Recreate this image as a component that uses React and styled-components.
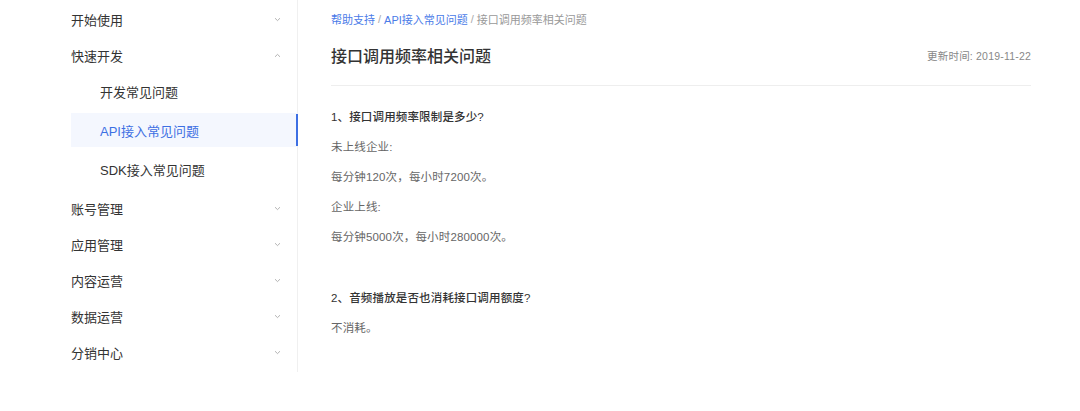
import React from "react";
import styled, { createGlobalStyle } from "styled-components";

const Global = createGlobalStyle`
  html, body { margin: 0; padding: 0; background: #fff; }
  body {
    font-family: "Liberation Sans", "Noto Sans CJK SC", sans-serif;
    color: #333;
    -webkit-font-smoothing: antialiased;
  }
`;

const Page = styled.div`
  display: flex;
  align-items: flex-start;
  padding-left: 71px;
  width: 1080px;
  box-sizing: border-box;
`;

const Sidebar = styled.nav`
  width: 227px;
  flex-shrink: 0;
  padding-top: 1px;
  box-sizing: border-box;
  border-right: 1px solid #f0f0f0;
  height: 372px;
`;

const MenuItem = styled.div`
  display: flex;
  align-items: center;
  justify-content: space-between;
  height: 36px;
  padding-right: 16px;
  font-size: 13px;
  color: #333;
`;

const SubList = styled.div`
  display: flex;
  flex-direction: column;
  gap: 5px;
  padding: 1px 0 4px;
`;

const SubItem = styled.div`
  position: relative;
  display: flex;
  align-items: center;
  height: 34px;
  padding-left: 29px;
  font-size: 13px;
  color: ${(p) => (p.$active ? "#3d6fe3" : "#333")};
  background: ${(p) => (p.$active ? "#f4f7fe" : "transparent")};
  &::after {
    content: "";
    display: ${(p) => (p.$active ? "block" : "none")};
    position: absolute;
    right: -1px;
    top: 1px;
    bottom: 1px;
    width: 2px;
    background: #3d6fe3;
  }
`;

const Chevron = ({ up }) => (
  <svg width="7" height="5" viewBox="0 0 7 5" style={{ transform: up ? "rotate(180deg)" : "none" }}>
    <path d="M1 1.2 L3.5 3.6 L6 1.2" fill="none" stroke="#a5a5a5" strokeWidth="0.85" />
  </svg>
);

const Main = styled.main`
  width: 700px;
  margin-left: 33px;
`;

const Breadcrumb = styled.div`
  height: 37px;
  display: flex;
  align-items: center;
  font-size: 11px;
  color: #999;
`;

const Crumb = styled.span`
  color: ${(p) => (p.$link ? "#4a7be8" : "#999")};
`;

const Sep = styled.span`
  margin: 0 3px;
  color: #aaa;
`;

const TitleRow = styled.div`
  display: flex;
  align-items: center;
  justify-content: space-between;
  height: 36px;
  padding-bottom: 12px;
  border-bottom: 1px solid #eeeeee;
`;

const Title = styled.h1`
  margin: 0;
  font-size: 16px;
  font-weight: 500;
  color: #333;
`;

const Updated = styled.span`
  font-size: 10.5px;
  color: #888;
  letter-spacing: 0.2px;
`;

const Body = styled.div`
  padding-top: 16px;
`;

const Section = styled.section`
  & + & { margin-top: 31px; }
`;

const Line = styled.p`
  margin: 0;
  line-height: 30px;
  font-size: 11.5px;
  letter-spacing: 0.15px;
  color: ${(p) => (p.$q ? "#333" : "#666")};
  font-weight: ${(p) => (p.$q ? 500 : 400)};
`;

const top = [
  { label: "开始使用" },
  { label: "快速开发", open: true, children: ["开发常见问题", "API接入常见问题", "SDK接入常见问题"], active: 1 },
  { label: "账号管理" },
  { label: "应用管理" },
  { label: "内容运营" },
  { label: "数据运营" },
  { label: "分销中心" },
];

export default function App() {
  return (
    <>
      <Global />
      <Page>
        <Sidebar>
          {top.map((m) => (
            <React.Fragment key={m.label}>
              <MenuItem>
                <span>{m.label}</span>
                <Chevron up={m.open} />
              </MenuItem>
              {m.open && (
                <SubList>
                  {m.children.map((c, i) => (
                    <SubItem key={c} $active={i === m.active}>
                      {c}
                    </SubItem>
                  ))}
                </SubList>
              )}
            </React.Fragment>
          ))}
        </Sidebar>
        <Main>
          <Breadcrumb>
            <Crumb $link>帮助支持</Crumb>
            <Sep>/</Sep>
            <Crumb $link>API接入常见问题</Crumb>
            <Sep>/</Sep>
            <Crumb>接口调用频率相关问题</Crumb>
          </Breadcrumb>
          <TitleRow>
            <Title>接口调用频率相关问题</Title>
            <Updated>更新时间: 2019-11-22</Updated>
          </TitleRow>
          <Body>
            <Section>
              <Line $q>1、接口调用频率限制是多少?</Line>
              <Line>未上线企业:</Line>
              <Line>每分钟120次，每小时7200次。</Line>
              <Line>企业上线:</Line>
              <Line>每分钟5000次，每小时280000次。</Line>
            </Section>
            <Section>
              <Line $q>2、音频播放是否也消耗接口调用额度?</Line>
              <Line>不消耗。</Line>
            </Section>
          </Body>
        </Main>
      </Page>
    </>
  );
}
